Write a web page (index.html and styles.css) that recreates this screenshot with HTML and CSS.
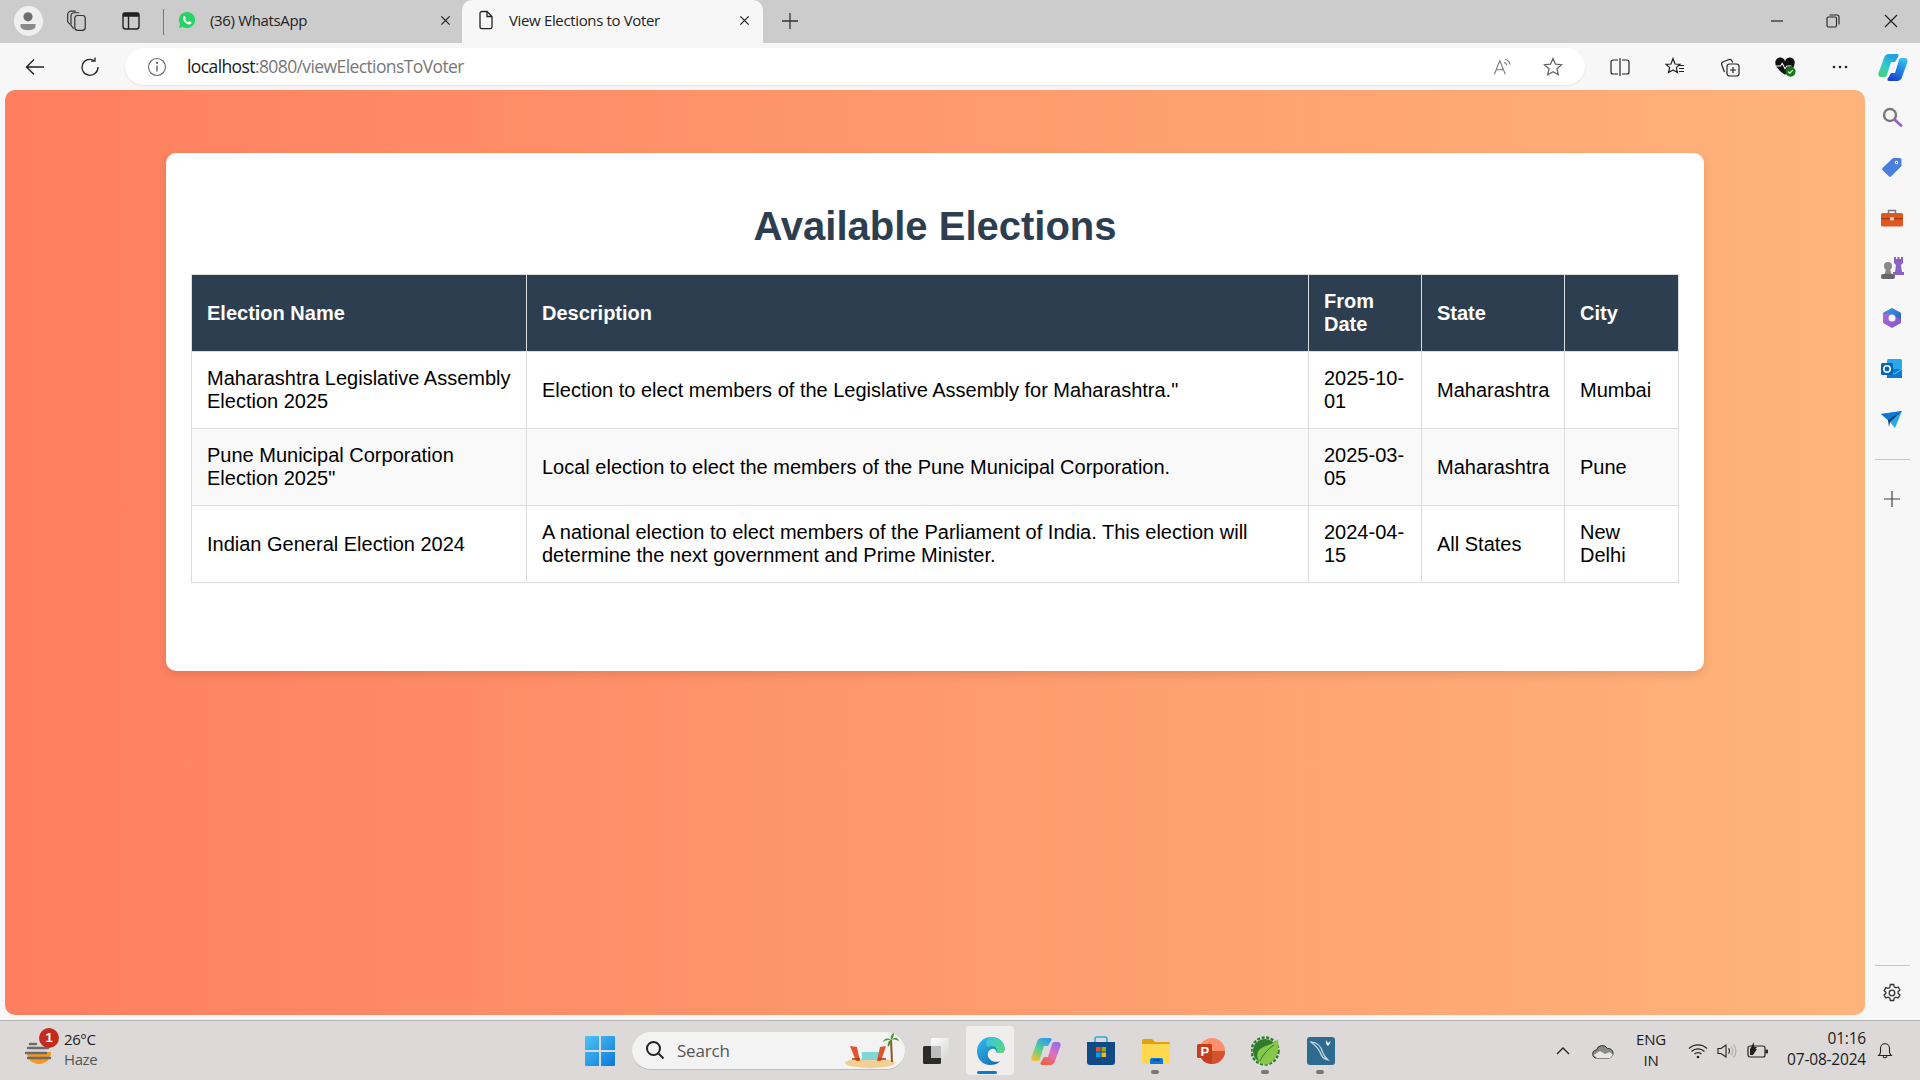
FILE: index.html
```html
<!DOCTYPE html>
<html lang="en">
<head>
<meta charset="utf-8">
<title>View Elections to Voter</title>
<link rel="stylesheet" href="styles.css">
</head>
<body>
<div class="window">
  <header class="tabstrip">
    <div class="slot w-profile"><span class="avatar"><svg class="i20" viewBox="0 0 20 24"><circle cx="10" cy="7" r="5.5" fill="#6e6e6e"/><path d="M1 15.5h18V18c0 3.500-4 5-9 5s-9-1.500-9-5z" fill="#8a8a8a"/></svg></span></div>
    <div class="slot w-coll"><svg class="i22" viewBox="0 0 20 20" fill="none" stroke="#333" stroke-width="1.100"><rect x="8" y="5" width="9.500" height="13.500" rx="2.500"/><path d="M7 17 4.500 14V5.500C4.500 3.800 5.800 2.500 7.500 2.500H12"/><path d="M3.500 13 1.500 10.500V4.500C1.500 2.500 3 1 5 1H9"/></svg></div>
    <div class="slot w-vtabs"><svg class="i20" viewBox="0 0 20 20" fill="none" stroke="#222" stroke-width="1.400"><rect x="2" y="2" width="16" height="16" rx="2.500"/><path d="M2.500 5h15V2.500h-15zM7.500 5v13" fill="#222"/></svg></div>
    <div class="tab-sep"></div>
    <div class="tab">
      <svg class="i18 tab-icon" viewBox="0 0 20 20"><path d="M10 1a9 9 0 0 0-7.700 13.600L1 19l4.500-1.200A9 9 0 1 0 10 1z" fill="#25d366"/><path d="M7 5.500c-.5 0-1.500.8-1.500 2.500 0 2 1.400 3.800 2.600 5 1.500 1.300 3.300 2 4.500 2 1.500 0 2.500-1.200 2.500-2 0-.5-2.200-1.700-2.600-1.700-.4 0-.9 1.100-1.300 1.100-1 0-3.300-2.200-3.300-3.200 0-.4.900-.8.900-1.300S7.500 5.500 7 5.500z" fill="#fff"/></svg>
      <span class="tab-title">(36) WhatsApp</span>
      <svg class="i12 tab-x" viewBox="0 0 12 12" fill="none" stroke="#222" stroke-width="1.400"><path d="M1.500 1.500l9 9M10.500 1.500l-9 9"/></svg>
    </div>
    <div class="tab tab-active">
      <svg class="i20 tab-icon" viewBox="0 0 20 20" fill="none" stroke="#222" stroke-width="1.300"><path d="M4 3.500C4 2.500 4.700 1.500 6 1.500h5l5 5v10.500c0 1-.8 1.700-1.800 1.700H5.800c-1 0-1.800-.7-1.800-1.700z"/><path d="M11 1.500v5h5"/></svg>
      <span class="tab-title">View Elections to Voter</span>
      <svg class="i12 tab-x" viewBox="0 0 12 12" fill="none" stroke="#222" stroke-width="1.400"><path d="M1.500 1.500l9 9M10.500 1.500l-9 9"/></svg>
    </div>
    <div class="slot w-plus"><svg class="i18" viewBox="0 0 18 18" fill="none" stroke="#333" stroke-width="1.300"><path d="M9 1v16M1 9h16"/></svg></div>
    <div class="grow"></div>
    <div class="slot w-win"><svg class="i14" viewBox="0 0 14 14" stroke="#222" stroke-width="1.200"><path d="M1 7h12"/></svg></div>
    <div class="slot w-win"><svg class="i14" viewBox="0 0 14 14" fill="none" stroke="#222" stroke-width="1.100"><rect x="1" y="3" width="9.500" height="10" rx="1.500"/><path d="M3.500 1h7.500a2 2 0 0 1 2 2v7.500"/></svg></div>
    <div class="slot w-winx"><svg class="i14" viewBox="0 0 14 14" fill="none" stroke="#222" stroke-width="1.200"><path d="M1 1l12 12M13 1L1 13"/></svg></div>
  </header>

  <nav class="toolbar">
    <div class="slot w-back"><svg class="i20" viewBox="0 0 20 20" fill="none" stroke="#222" stroke-width="1.400"><path d="M19 10H1.500M9 2.500 1.500 10 9 17.500"/></svg></div>
    <div class="slot w-reload"><svg class="i20" viewBox="0 0 20 20" fill="none" stroke="#222" stroke-width="1.300"><path d="M14.500 3.700A8 8 0 1 0 18 10"/><path d="M15 .5v3.700h-3.800"/></svg></div>
    <div class="address">
      <svg class="i20 info" viewBox="0 0 20 20" fill="none" stroke="#666" stroke-width="1.100"><circle cx="10" cy="10" r="8.500"/><path d="M10 8.500v6" stroke-width="1.400"/><circle cx="10" cy="5.800" r=".6" fill="#666"/></svg>
      <span class="url"><span class="url-host">localhost</span>:8080/viewElectionsToVoter</span>
      <div class="grow"></div>
      <div class="slot w-addr"><svg class="i20" viewBox="0 0 22 20" fill="none" stroke="#777" stroke-width="1.200"><path d="M1.500 18 7.500 3l6 15M3.500 13h8"/><path d="M12 5a5 5 0 0 1 3.500 3M13.500 1.500a9 9 0 0 1 5.500 6"/></svg></div>
      <div class="slot w-addr2"><svg class="i20" viewBox="0 0 20 20" fill="none" stroke="#666" stroke-width="1.300"><path d="M10 1.500l2.500 5.600 6.100.6-4.600 4.100 1.300 6-5.300-3.100-5.300 3.100 1.300-6L1.400 7.700l6.100-.6z"/></svg></div>
    </div>
    <div class="slot w-tool"><svg class="i20" viewBox="0 0 20 20" fill="none" stroke="#222" stroke-width="1.200"><path d="M8 3H3a2 2 0 0 0-2 2v10a2 2 0 0 0 2 2h5M12 3h5a2 2 0 0 1 2 2v10a2 2 0 0 1-2 2h-5M10 1v18"/></svg></div>
    <div class="slot w-tool"><svg class="i20" viewBox="0 0 20 20" fill="none" stroke="#222" stroke-width="1.200"><path d="M8 1.500 10 7l5 .3-3.700 3.300 1.200 5-4.500-2.700-4.500 2.700 1.200-5L1 7.300 6 7z"/><path d="M13 8.500h6M14 11.500h5M14 14.500h5"/></svg></div>
    <div class="slot w-tool"><svg class="i20" viewBox="0 0 20 20" fill="none" stroke="#222" stroke-width="1.200"><rect x="7" y="7" width="12" height="12" rx="2.500"/><path d="M13 10v6M10 13h6"/><path d="M4.500 15 1.800 8a2.500 2.500 0 0 1 1.500-3.200L9 2.500a2.500 2.500 0 0 1 3 1.500l.7 1.500"/></svg></div>
    <div class="slot w-tool"><svg class="i22" viewBox="0 0 24 22"><path d="M12 19.500C5 14.500 1.500 11 1.500 7A5.300 5.300 0 0 1 12 5a5.300 5.300 0 0 1 10.500 2c0 4-3.500 7.500-10.500 12.500z" fill="#111"/><path d="M2 10h5l2-3 3 6 2-3h5" fill="none" stroke="#fff" stroke-width="1.100"/><circle cx="18" cy="16" r="5.500" fill="#107c10"/><path d="M15.500 16l1.800 1.800 3.200-3.400" fill="none" stroke="#fff" stroke-width="1.200"/></svg></div>
    <div class="slot w-tool"><svg class="i20" viewBox="0 0 20 20" fill="#222"><circle cx="4" cy="10" r="1.300"/><circle cx="10" cy="10" r="1.300"/><circle cx="16" cy="10" r="1.300"/></svg></div>
    <div class="slot w-copilot"><svg class="i30" viewBox="0 0 30 28"><defs><linearGradient id="cpa" x1=".7" y1="0" x2=".2" y2="1"><stop offset="0" stop-color="#1f9be8"/><stop offset=".6" stop-color="#35cfc0"/><stop offset="1" stop-color="#45d07a"/></linearGradient><linearGradient id="cpb" x1=".7" y1="0" x2=".2" y2="1"><stop offset="0" stop-color="#1c3fd0"/><stop offset=".6" stop-color="#1f8fe6"/><stop offset="1" stop-color="#38c6f0"/></linearGradient></defs><path d="M11 1h8c1 0 2 1 1.500 2L17 9h-4l-4 13c-.5 1.500-1.500 2-3 2H3c-2 0-3-2-2.500-4L6 5c.7-2.500 2.500-4 5-4z" fill="url(#cpa)"/><path d="M11 1h8c1 0 2 1 1.500 2L17 9h-4l-4 13c-.5 1.500-1.500 2-3 2H3c-2 0-3-2-2.500-4L6 5c.7-2.500 2.500-4 5-4z" fill="url(#cpb)" transform="rotate(180 15 14.500)"/></svg></div>
  </nav>

  <div class="main">
    <main class="viewport">
      <section class="card">
        <h1 class="title">Available Elections</h1>
        <table class="elections">
          <colgroup>
            <col class="col-name"><col class="col-desc"><col class="col-from"><col class="col-state"><col class="col-city">
          </colgroup>
          <thead>
            <tr><th>Election Name</th><th>Description</th><th>From Date</th><th>State</th><th>City</th></tr>
          </thead>
          <tbody>
            <tr><td>Maharashtra Legislative Assembly Election 2025</td><td>Election to elect members of the Legislative Assembly for Maharashtra."</td><td>2025-10-01</td><td>Maharashtra</td><td>Mumbai</td></tr>
            <tr><td>Pune Municipal Corporation Election 2025"</td><td>Local election to elect the members of the Pune Municipal Corporation.</td><td>2025-03-05</td><td>Maharashtra</td><td>Pune</td></tr>
            <tr><td>Indian General Election 2024</td><td>A national election to elect members of the Parliament of India. This election will determine the next government and Prime Minister.</td><td>2024-04-15</td><td>All States</td><td>New Delhi</td></tr>
          </tbody>
        </table>
      </section>
    </main>
    <aside class="sidebar">
      <div class="side-item"><svg class="i22" viewBox="0 0 22 22"><circle cx="9" cy="9" r="6" fill="none" stroke="#777" stroke-width="2.400"/><path d="M13.500 13.500 20 19.500" stroke="#9a63c9" stroke-width="3" stroke-linecap="round"/></svg></div>
      <div class="side-item"><svg class="i22" viewBox="0 0 22 22"><path d="M12 2h7a1.500 1.500 0 0 1 1.500 1.500V10L10 20.500a1.500 1.500 0 0 1-2 0L1.500 14a1.500 1.500 0 0 1 0-2z" fill="#4a7fe0"/><circle cx="15.500" cy="6.500" r="1.700" fill="#fff"/><circle cx="15.500" cy="6.500" r=".8" fill="#2a4fa0"/></svg></div>
      <div class="side-item"><svg class="i22" viewBox="0 0 22 22"><path d="M7.500 6V3.500h7V6" fill="none" stroke="#777" stroke-width="1.500"/><rect x="0" y="6" width="22" height="13.500" rx="1.500" fill="#e0561f"/><rect x="0" y="11" width="22" height="1.300" fill="#a83a12"/><rect x="9" y="10" width="4" height="3.500" rx="1" fill="#ccc"/></svg></div>
      <div class="side-item"><svg class="i24" viewBox="0 0 24 24"><circle cx="8" cy="10" r="4" fill="#888"/><path d="M6 13h4l1.500 5h-7z" fill="#888"/><rect x="1" y="18" width="14" height="5" rx="2" fill="#666"/><path d="M14 1h2v2h1.500V1h2v2H21V1h2v6l-2 2 1 7h2v3H13v-3h2l1-7-2-2z" fill="#8b63c4"/></svg></div>
      <div class="side-item"><svg class="i22" viewBox="0 0 22 22"><defs><linearGradient id="m3a" x1="0" y1="0" x2="1" y2="1"><stop offset="0" stop-color="#3fa0e8"/><stop offset="1" stop-color="#2a5fc8"/></linearGradient><linearGradient id="m3b" x1="0" y1="0" x2="1" y2="1"><stop offset="0" stop-color="#c06bd0"/><stop offset="1" stop-color="#7a55d0"/></linearGradient></defs><path d="M11 1l9 5v10l-9 5-9-5V6z" fill="url(#m3b)"/><path d="M11 1l9 5v6l-6-3-6-2-6 0V6z" fill="url(#m3a)"/><circle cx="11" cy="11" r="3.500" fill="#f7f7f7"/></svg></div>
      <div class="side-item"><svg class="i22" viewBox="0 0 22 22"><rect x="6" y="1" width="15" height="19" rx="1.500" fill="#28a8ea"/><path d="M6 11h15v9H6z" fill="#0f78d4"/><path d="M6 11l7.500 5L21 11" fill="none" stroke="#50d9ff" stroke-width="1"/><rect x="0" y="5" width="12" height="12" rx="1.500" fill="#0364b8"/><circle cx="6" cy="11" r="3.200" fill="none" stroke="#fff" stroke-width="1.600"/></svg></div>
      <div class="side-item"><svg class="i22" viewBox="0 0 22 22"><path d="M0 6 21 3 14 20 9 14z" fill="#28a8ea"/><path d="M0 6 21 3 7 12z" fill="#0f78d4"/><path d="M7 12 21 3 9 14l-1 5z" fill="#0b3a6e"/></svg></div>
      <div class="side-sep"></div>
      <div class="side-item side-plus"><svg class="i16" viewBox="0 0 16 16" stroke="#444" stroke-width="1.200"><path d="M8 0v16M0 8h16"/></svg></div>
      <div class="grow"></div>
      <div class="side-sep"></div>
      <div class="side-item side-gear"><svg class="i20" viewBox="0 0 20 20" fill="none" stroke="#333" stroke-width="1.300"><circle cx="10" cy="10" r="2.800"/><path d="M8.300 1.500h3.400l.5 2.400 1.700.9 2.300-.8 1.700 3-1.800 1.600v1.800l1.800 1.600-1.700 3-2.300-.8-1.700.9-.5 2.400H8.300l-.5-2.400-1.700-.9-2.300.8-1.700-3 1.800-1.600V9.200L2.100 7.600l1.700-3 2.300.8 1.700-.9z"/></svg></div>
    </aside>
  </div>

  <footer class="taskbar">
    <div class="weather">
      <svg class="i30 weather-icon" viewBox="0 0 30 30"><path d="M3 16h24c0 7-5 12-12 12S3 23 3 16z" fill="#f29a1f"/><path d="M6 8h6M4 12h20M2 17h20M4 22h22" stroke="#6b6b6b" stroke-width="2.400" stroke-linecap="round"/></svg>
      <span class="badge">1</span>
      <div class="weather-text"><span>26°C</span><span class="muted">Haze</span></div>
    </div>
    <div class="slot w-task"><svg class="i30" viewBox="0 0 30 30"><defs><linearGradient id="win" x1="0" y1="0" x2="1" y2="1"><stop offset="0" stop-color="#4fc3f7"/><stop offset="1" stop-color="#0a78d7"/></linearGradient></defs><path d="M0 1a1 1 0 0 1 1-1h13v14H0zM16 0h13a1 1 0 0 1 1 1v13H16zM0 16h14v14H1a1 1 0 0 1-1-1zM16 16h14v13a1 1 0 0 1-1 1H16z" fill="url(#win)"/></svg></div>
    <div class="search">
      <svg class="i20" viewBox="0 0 20 20" fill="none" stroke="#222" stroke-width="2"><circle cx="8.500" cy="8.500" r="6.500"/><path d="M13.500 13.500 18.500 18.500"/></svg>
      <span class="search-label">Search</span>
      <div class="grow"></div>
      <svg class="beach" viewBox="0 0 56 36"><ellipse cx="26" cy="31" rx="25" ry="5" fill="#f2cf94"/><rect x="18" y="20" width="18" height="8" fill="#7fd6d8"/><path d="M6 14l7 1 3 14H12zM42 14l-6 1-3 14h4z" fill="#e2532f"/><path d="M8 27h8M34 27h8" stroke="#a83a1a" stroke-width="1.600"/><path d="M47 8l1 22" stroke="#8a5a2b" stroke-width="2"/><path d="M47 8c-4-3-7-1-8 2 3-2 5-2 8-2zM47 8c4-4 7-2 8 1-3-1-5-2-8-1zM47 8c-1-3 0-6 3-7 0 3-1 5-3 7zM47 8c-3 1-4 4-3 7 2-2 3-4 3-7z" fill="#4e9a3a"/></svg>
    </div>
    <div class="slot w-start-gap"></div>
    <div class="slot w-task"><svg class="i26" viewBox="0 0 26 26"><defs><linearGradient id="tv" x1="0" y1="0" x2="1" y2="1"><stop offset="0" stop-color="#fdfdfd"/><stop offset="1" stop-color="#d8d8d8"/></linearGradient></defs><rect x="8" y="0" width="18" height="20" rx="1.500" fill="url(#tv)"/><rect x="0" y="8" width="18" height="18" rx="1.500" fill="#2b2b2b"/><rect x="8" y="8" width="10" height="12" fill="#bdbdbd"/></svg></div>
    <div class="slot w-task slot-active"><span class="tile"></span><svg class="i30 tile-icon" viewBox="0 0 32 32"><defs><linearGradient id="edg" x1="0" y1="0" x2="1" y2="1"><stop offset="0" stop-color="#35c1f1"/><stop offset="1" stop-color="#0b5cab"/></linearGradient><linearGradient id="edg2" x1="0" y1="0" x2="1" y2="1"><stop offset="0" stop-color="#35c1f1"/><stop offset="1" stop-color="#5fdc6b"/></linearGradient></defs><path d="M16 1C7 1 1 8.500 1 16.500 1 25 8 31 15 31c4 0 8-1 11-4-3 1-8 1-11-2-2.500-2.500-3-5-2-8 1-2 3-3.500 5-3.500s4 1.500 4 4h7c1-1 1.500-2.500 1.500-4C30.500 6 24 1 16 1z" fill="url(#edg)"/><path d="M16 1c8 0 14.500 5 14.500 12.500 0 2-1 4-3.500 4.500-2 0-5-.5-5-4-1-3.500-6-4.500-9-2C9 9 11 1 16 1z" fill="url(#edg2)"/></svg><span class="tile-bar"></span></div>
    <div class="slot w-task"><svg class="i30" viewBox="0 0 30 28"><defs><linearGradient id="cp1" x1=".7" y1="0" x2=".2" y2="1"><stop offset="0" stop-color="#2f9cf0"/><stop offset=".55" stop-color="#5fd08a"/><stop offset="1" stop-color="#f5c030"/></linearGradient><linearGradient id="cp2" x1=".7" y1="0" x2=".2" y2="1"><stop offset="0" stop-color="#f0603a"/><stop offset=".5" stop-color="#e070c0"/><stop offset="1" stop-color="#9a6ae8"/></linearGradient></defs><path d="M11 1h8c1 0 2 1 1.500 2L17 9h-4l-4 13c-.5 1.500-1.500 2-3 2H3c-2 0-3-2-2.500-4L6 5c.7-2.500 2.500-4 5-4z" fill="url(#cp1)"/><path d="M11 1h8c1 0 2 1 1.500 2L17 9h-4l-4 13c-.5 1.500-1.500 2-3 2H3c-2 0-3-2-2.500-4L6 5c.7-2.500 2.500-4 5-4z" fill="url(#cp2)" transform="rotate(180 15 14.500)"/></svg></div>
    <div class="slot w-task"><svg class="i30" viewBox="0 0 30 30"><path d="M9 7V3a2 2 0 0 1 2-2h8a2 2 0 0 1 2 2v4" fill="none" stroke="#2fa8e0" stroke-width="1.600"/><path d="M1 6h28v20a3 3 0 0 1-3 3H4a3 3 0 0 1-3-3z" fill="#124a85"/><rect x="10" y="11" width="4.500" height="4.500" fill="#f25022"/><rect x="15.500" y="11" width="4.500" height="4.500" fill="#7fba00"/><rect x="10" y="16.500" width="4.500" height="4.500" fill="#00a4ef"/><rect x="15.500" y="16.500" width="4.500" height="4.500" fill="#ffb900"/></svg></div>
    <div class="slot w-task"><svg class="i30" viewBox="0 0 30 30"><path d="M1 5a2 2 0 0 1 2-2h8l3 3h14a1 1 0 0 1 1 1v3H1z" fill="#e0a010"/><path d="M1 8h28v19a1 1 0 0 1-1 1H2a1 1 0 0 1-1-1z" fill="#ffd84f"/><path d="M9 24a2 2 0 0 1 2-2h9a2 2 0 0 1 2 2v4H9z" fill="#0a78d7"/><rect x="12" y="23.500" width="7" height="1.200" fill="#063f78"/></svg><span class="run-dot"></span></div>
    <div class="slot w-task"><svg class="i30" viewBox="0 0 30 30"><circle cx="16" cy="15" r="13" fill="#ff8f6b"/><path d="M16 15h13a13 13 0 0 1-13 13z" fill="#d35230"/><path d="M16 15H3a13 13 0 0 0 13 13z" fill="#c43e1c"/><rect x="1" y="8" width="15" height="14" rx="1.500" fill="#c43e1c"/><text x="4.500" y="19.500" class="ppt-letter">P</text></svg></div>
    <div class="slot w-task"><svg class="i30" viewBox="0 0 30 30"><circle cx="14" cy="15" r="13.500" fill="none" stroke="#2f7d2a" stroke-width="2.400" stroke-dasharray="3 1.600"/><circle cx="14" cy="15" r="12" fill="#2f7d2a"/><path d="M27 3c1.500 10-1 22-10 25C10 30 5 24 6.500 17 9 9 20 11 27 3z" fill="#86c84a"/><path d="M9 25C12 18 17 13 23 9" fill="none" stroke="#2f7d2a" stroke-width="1"/></svg><span class="run-dot"></span></div>
    <div class="slot w-task"><svg class="i30" viewBox="0 0 30 30"><rect x="1" y="1" width="28" height="28" rx="3" fill="#2f6a8f"/><path d="M5 6c6 0 10 4 12 11 1 3 3 5 5 7-4-1-7-4-8-8-2-4-5-7-9-10z" fill="none" stroke="#c9dbe6" stroke-width="1.200"/><path d="M20 4l2 3 3-2-2 4-1 1-2-2z" fill="#e6eef3"/></svg><span class="run-dot"></span></div>
    <div class="grow"></div>
    <div class="slot t-chev"><svg class="i14" viewBox="0 0 14 14" fill="none" stroke="#222" stroke-width="1.300"><path d="M1 10l6-6 6 6"/></svg></div>
    <div class="slot t-cloud"><svg class="i22" viewBox="0 0 22 16"><path d="M5 15a4 4 0 0 1-.5-8 6 6 0 0 1 11-1.500A4.800 4.800 0 0 1 17 15z" fill="#8a8a8a" stroke="#333" stroke-width="1"/><path d="M1.500 12 8 8l5 3 5-2 3 3-3 3H5z" fill="#e8e6e4"/></svg></div>
    <div class="t-lang"><span>ENG</span><span>IN</span></div>
    <div class="slot t-wifi"><svg class="i20" viewBox="0 0 20 16" fill="none" stroke="#222" stroke-width="1.200"><path d="M1 5.500a13 13 0 0 1 18 0M3.500 8.500a9.500 9.500 0 0 1 13 0M6.500 11a5 5 0 0 1 7 0"/><circle cx="10" cy="14" r="1.300" fill="#222" stroke="none"/></svg></div>
    <div class="slot t-spk"><svg class="i20" viewBox="0 0 20 16" fill="none" stroke="#222" stroke-width="1.100"><path d="M1 5.500h3L9 2v12L4 10.500H1z"/><path d="M11.500 5.500a3.500 3.500 0 0 1 0 5"/><path d="M14 3.500a7 7 0 0 1 0 9M16.500 1.500a10 10 0 0 1 0 13" stroke="#aaa"/></svg></div>
    <div class="slot t-batt"><svg class="i22" viewBox="0 0 22 18"><rect x="1" y="4" width="17" height="11" rx="2" fill="none" stroke="#222" stroke-width="1.200"/><rect x="18.500" y="7.500" width="2.500" height="4" rx="1" fill="#222"/><path d="M3 13V7h7l-4 6z" fill="#222"/><path d="M7 0 3 7h3l-1 4 5-6H7z" fill="#222"/></svg></div>
    <div class="t-clock"><span>01:16</span><span>07-08-2024</span></div>
    <div class="slot t-bell"><svg class="i18" viewBox="0 0 18 20" fill="none" stroke="#222" stroke-width="1.200"><path d="M2 15c1-1 2-2 2-4V7a5 5 0 0 1 10 0v4c0 2 1 3 2 4z"/><path d="M7 15.500a2 2 0 0 0 4 0"/></svg></div>
  </footer>
</div>
</body>
</html>
```
FILE: styles.css
```css
* { box-sizing: border-box; }
html, body { margin: 0; height: 100%; overflow: hidden; }
body { font-family: "Liberation Sans", Arial, sans-serif; }
.window { width: 1920px; height: 1080px; display: flex; flex-direction: column; background: #f7f7f7; }
.grow { flex: 1 1 auto; }
.slot { display: flex; align-items: center; justify-content: center; flex: none; height: 100%; position: relative; }
svg { display: block; flex: none; }
.i12 { width: 12px; height: 12px; }
.i14 { width: 14px; height: 14px; }
.i16 { width: 16px; height: 16px; }
.i18 { width: 18px; height: 18px; }
.i20 { width: 20px; height: 20px; }
.i22 { width: 22px; height: 22px; }
.i24 { width: 24px; height: 24px; }
.i26 { width: 26px; height: 26px; }
.i30 { width: 30px; height: 30px; }

/* tab strip */
.tabstrip { height: 43px; flex: none; display: flex; background: #cccccc; }
.tabstrip > .slot { padding-bottom: 1px; }
.w-profile { width: 56px; }
.avatar { width: 29px; height: 30px; border-radius: 50%; background: #efefef; display: flex; align-items: center; justify-content: center; }
.w-coll { width: 42px; }
.w-vtabs { width: 65px; }
.tab-sep { width: 1px; height: 26px; margin-top: 9px; background: #777; flex: none; }
.tab { width: 298px; flex: none; display: flex; align-items: center; padding: 0 11px 3px 14px; font: 15px "Open Sans", "Noto Sans", sans-serif; color: #222; letter-spacing: -.35px; }
.tab-active { width: 301px; background: #f7f7f7; border-radius: 10px 10px 0 0; padding: 0 13px 3px 14px; }
.tab-icon { margin-right: 14px; }
.tab-active .tab-icon { margin-right: 13px; }
.tab-title { flex: 1; }
.tab-x { width: 11px; height: 11px; }
.w-plus { width: 54px; }
.w-win { width: 56px; }
.w-winx { width: 59px; }

/* toolbar */
.toolbar { height: 47px; flex: none; display: flex; align-items: center; padding-left: 12px; background: #f7f7f7; }
.w-back { width: 46px; }
.w-reload { width: 46px; margin-left: 9px; }
.address { width: 1460px; height: 37px; margin-left: 12px; flex: none; border-radius: 19px; background: #fff; display: flex; align-items: center; padding-left: 22px; box-shadow: 0 1px 2px rgba(0,0,0,.08); }
.info { margin-right: 20px; }
.url { font: 17.500px "Open Sans", "Noto Sans", sans-serif; color: #777; letter-spacing: -.6px; padding-bottom: 1px; }
.url-host { color: #1a1a1a; }
.w-addr { width: 50px; }
.w-addr2 { width: 50px; margin-right: 7px; }
.w-tool { width: 55px; }
.address + .w-tool { margin-left: 7px; }
.w-copilot { width: 52px; }

/* main */
.main { flex: 1 1 auto; min-height: 0; display: flex; padding: 0 0 5px 5px; }
.viewport { flex: 1 1 auto; border-radius: 10px; background: linear-gradient(to right, #ff7e5f, #feb47b); padding: 63px 161px 0; }
.sidebar { width: 55px; flex: none; display: flex; flex-direction: column; align-items: center; padding: 2px 1px 0 0; }
.side-item { height: 50.300px; width: 100%; flex: none; display: flex; align-items: center; justify-content: center; }
.side-sep { width: 35px; height: 1px; flex: none; background: #c8c8c8; margin-top: 15px; }
.side-plus { margin-top: 14px; height: 50px; }
.side-gear { height: 54px; margin-bottom: -5px; }

/* card */
.card { background: #fff; border-radius: 10px; padding: 25px 25px 88px; box-shadow: 0 4px 8px rgba(0,0,0,.1); }
.title { margin: 25px 0; font-size: 40px; line-height: 46px; font-weight: 700; text-align: center; color: #2c3e50; }
.elections { width: 100%; table-layout: fixed; border-collapse: collapse; font-size: 20px; color: #000; }
.col-name { width: 335px; }
.col-desc { width: 782px; }
.col-from { width: 113px; }
.col-state { width: 143px; }
.col-city { width: 114px; }
.elections th, .elections td { border: 1px solid #ddd; padding: 15px; text-align: left; line-height: 23px; }
.elections th { background: #2c3e50; color: #fff; font-weight: 700; }
.elections tbody tr:nth-child(even) { background: #f9f9f9; }

/* taskbar */
.taskbar { height: 60px; flex: none; display: flex; align-items: center; background: #dcd9d8; border-top: 1px solid #b5b3b2; color: #1c1c1c; }
.weather { width: 572px; height: 100%; flex: none; display: flex; align-items: center; position: relative; padding-left: 24px; }
.weather-icon { width: 30px; height: 30px; }
.badge { position: absolute; left: 39px; top: 7px; width: 20px; height: 20px; border-radius: 50%; background: #c42b1c; color: #fff; font-size: 13px; font-weight: 700; text-align: center; line-height: 20px; }
.weather-text { display: flex; flex-direction: column; margin: 0 0 3px 10px; font: 15px/20.500px "Open Sans", "Noto Sans", sans-serif; letter-spacing: -.4px; }
.muted { color: #555; }
.w-task { width: 55px; }
.search { width: 273px; height: 38px; margin-left: 5px; flex: none; background: #f3f3f3; border-radius: 19px; border-bottom: 1px solid #bbb; display: flex; align-items: center; padding-left: 13px; font: 17px "Open Sans", "Noto Sans", sans-serif; color: #555; }
.search-label { margin-left: 12px; letter-spacing: -.2px; }
.beach { width: 56px; height: 36px; margin-right: 5px; }
.w-start-gap { width: 3px; }
.tile { position: absolute; left: 3px; right: 4px; top: 5px; bottom: 5px; background: #f0eeed; border-radius: 4px; }
.tile-icon { position: relative; }
.tile-bar { position: absolute; left: 14px; width: 20px; bottom: 6px; height: 3px; border-radius: 2px; background: #0a78d7; }
.run-dot { position: absolute; left: 23px; bottom: 6px; width: 8px; height: 4px; border-radius: 2px; background: #777; }
.ppt-letter { font: 700 13px "Liberation Sans", sans-serif; fill: #fff; }
.t-chev { width: 40px; }
.t-cloud { width: 40px; }
.t-lang { width: 56px; flex: none; display: flex; flex-direction: column; align-items: center; margin-bottom: 2px; font: 15px/21px "Open Sans", "Noto Sans", sans-serif; letter-spacing: -.2px; }
.t-wifi { width: 38px; }
.t-spk { width: 20px; }
.t-batt { width: 42px; }
.t-clock { width: 87px; flex: none; display: flex; flex-direction: column; align-items: flex-end; margin-bottom: 3px; font: 15.500px/21px "Open Sans", "Noto Sans", sans-serif; letter-spacing: -.2px; }
.t-bell { width: 34px; margin: 0 18px 0 2px; }
```
